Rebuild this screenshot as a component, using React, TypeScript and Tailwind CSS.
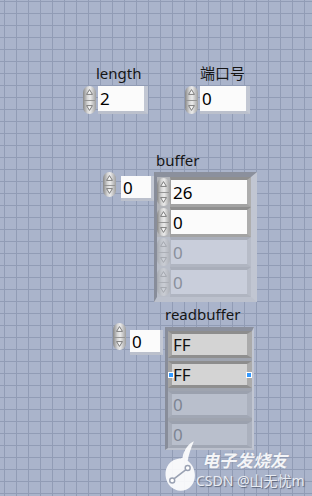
import type { ReactNode } from "react";

// LabVIEW front panel: two scalar controls, a numeric array control, an indicator array.

function Spinner({ size, faded }: { size: string; faded?: boolean }) {
  return (
    <div
      className={[
        "relative flex flex-col items-center justify-between w-[13px] rounded-full py-[3px]",
        "bg-[linear-gradient(to_right,#888888,#d6d6d6_35%,#ebebeb_55%,#9f9f9f)]",
        size,
        faded ? "opacity-35" : "",
      ].join(" ")}
    >
      <svg width="7" height="6" viewBox="0 0 7 6">
        <path d="M3.5 0.6 L6.4 5.4 H0.6 Z" fill="#f6f6f6" stroke="#707070" strokeWidth="0.9" />
      </svg>
      <div className="absolute left-[1px] right-[1px] top-1/2 h-px bg-[#959595]" />
      <svg width="7" height="6" viewBox="0 0 7 6">
        <path d="M3.5 5.4 L6.4 0.6 H0.6 Z" fill="#f6f6f6" stroke="#707070" strokeWidth="0.9" />
      </svg>
    </div>
  );
}

function Label({ children, className = "" }: { children: ReactNode; className?: string }) {
  return <div className={`h-[18px] text-[15px] leading-[18px] text-[#161616] whitespace-nowrap ${className}`}>{children}</div>;
}

function TopNumeric({ value }: { value: string }) {
  return (
    <div className="flex items-start">
      <Spinner size="h-[28px]" />
      <div className="ml-[2px] flex items-center w-[50px] h-[28px] pl-[2px] bg-[#fbfbfb] border-r-[4px] border-b-[3px] border-r-[#c2c7d3] border-b-[#bbc0cc] text-[17px] leading-none text-black">
        {value}
      </div>
    </div>
  );
}

function IndexNumeric({ spin, boxTop, gap, value }: { spin: string; boxTop: string; gap: string; value: string }) {
  return (
    <div className="flex items-start">
      <Spinner size={spin} />
      <div className={`${gap} ${boxTop} flex items-center w-[33px] h-[25px] pl-[2px] bg-[#fbfbfb] border-r-[3px] border-b-[3px] border-r-[#c2c7d3] border-b-[#bbc0cc] text-[17px] leading-none text-black`}>
        {value}
      </div>
    </div>
  );
}

function BufferElem({ value, disabled }: { value: string; disabled?: boolean }) {
  return (
    <div className="flex h-[30px]">
      <div className={`w-[13px] flex items-center ${disabled ? "bg-[#b9bec9]" : "bg-[#b3b5ba]"}`}>
        <Spinner size="h-[28px]" faded={disabled} />
      </div>
      <div
        className={[
          "flex-1 flex items-center pl-[2px] text-[17px] leading-none border-l border-t-[3px] border-b-[3px] border-r-[4px]",
          disabled
            ? "bg-[#c9cedb] text-[#8a909c] border-l-[#b3b8c4] border-t-[#a9aeba] border-b-[#b0b5c1] border-r-[#b7bcc8]"
            : "bg-[#fbfbfb] text-black border-l-[#a2a2a2] border-t-[#8f8f8f] border-b-[#a3a3a3] border-r-[#aeaeae]",
        ].join(" ")}
      >
        {value}
      </div>
    </div>
  );
}

function ReadElem({ value, disabled, selected }: { value: string; disabled?: boolean; selected?: boolean }) {
  return (
    <div
      className={[
        "relative flex items-center h-[27px] pl-[1px] text-[17px] leading-none border-l-[4px] border-t-[3px] border-b-[3px] border-r-[5px]",
        disabled
          ? "bg-[#b9bfcc] text-[#7e8593] border-l-[#a7adba] border-t-[#9ba1ae] border-b-[#a1a7b4] border-r-[#abb1be]"
          : "bg-[#d4d4d4] text-[#111] border-l-[#a5a5a5] border-t-[#8d8d8d] border-b-[#8f8f8f] border-r-[#ababab]",
      ].join(" ")}
    >
      {value}
      {selected && (
        <>
          <div className="absolute -left-[4px] top-1/2 -translate-y-1/2 w-[6px] h-[6px] bg-[#3399ff] border border-white" />
          <div className="absolute -right-[5px] top-1/2 -translate-y-1/2 w-[6px] h-[6px] bg-[#3399ff] border border-white" />
        </>
      )}
    </div>
  );
}

function Watermark() {
  return (
    <div className="absolute left-[165px] top-[438px] flex items-start pointer-events-none">
      <svg width="33" height="56" viewBox="0 0 32 54">
        <path
          d="M13 20 C5 21 0 28 0.5 36 C1 45 8 51 15 51 C24 51 29 44 29 36 C29 30 26 25 22 22 C23 16 25 10 28 3 C22 6 18 12 17 19 C16 19.5 14.5 19.8 13 20 Z"
          fill="#ffffff"
          fillOpacity="0.9"
        />
        <line x1="8" y1="40" x2="21" y2="30" stroke="#9aa2b3" strokeWidth="1.6" />
        <circle cx="7" cy="41" r="2.4" fill="#fff" stroke="#9aa2b3" strokeWidth="1.4" />
        <circle cx="22" cy="29" r="2.4" fill="#fff" stroke="#9aa2b3" strokeWidth="1.4" />
      </svg>
      <div className="ml-[4px] flex flex-col">
        <div className="mt-[14px] text-[17px] leading-[18px] font-bold italic text-white/90 [text-shadow:0_0_2px_rgba(120,130,150,0.6)]">
          电子发烧友
        </div>
        <div className="-ml-[6px] mt-[3px] text-[14px] leading-[15px] text-[#e9ecf3] [text-shadow:1px_1px_1px_rgba(60,70,90,0.7)]">
          CSDN @山无忧m
        </div>
      </div>
    </div>
  );
}

export default function App() {
  return (
    <div
      className={[
        "relative w-[312px] h-[496px] overflow-hidden",
        "font-['Noto_Sans','Noto_Sans_CJK_SC',sans-serif]",
        "bg-[#aab4cb] bg-[linear-gradient(90deg,#919cb5_1px,transparent_1px),linear-gradient(#919cb5_1px,transparent_1px)]",
        "[background-size:12px_12px] [background-position:4px_1px]",
      ].join(" ")}
    >
      {/* scalar controls */}
      <div className="flex pl-[83px] pt-[64px] gap-[37px]">
        <div className="flex flex-col">
          <Label className="ml-[13px]">length</Label>
          <div className="mt-[4px]">
            <TopNumeric value="2" />
          </div>
        </div>
        <div className="flex flex-col">
          <Label className="ml-[15px]">端口号</Label>
          <div className="mt-[4px]">
            <TopNumeric value="0" />
          </div>
        </div>
      </div>

      {/* buffer array control */}
      <div className="flex pl-[103px] mt-[37px]">
        <div className="pt-[21px]">
          <IndexNumeric spin="h-[25px]" boxTop="mt-[4px]" gap="ml-[5px]" value="0" />
        </div>
        <div className="flex flex-col">
          <Label className="ml-[2px]">buffer</Label>
          <div className="mt-[3px] w-[103px] flex flex-col border-l-[3px] border-t-[5px] border-r-[6px] border-b-[5px] border-l-[#888d9a] border-t-[#8b909d] border-r-[#c1c6d2] border-b-[#bcc1cd] bg-[#a7acb7]">
            <BufferElem value="26" />
            <BufferElem value="0" />
            <BufferElem value="0" disabled />
            <BufferElem value="0" disabled />
          </div>
        </div>
      </div>

      {/* readbuffer array indicator */}
      <div className="flex pl-[113px] mt-[3px]">
        <div className="pt-[18px]">
          <IndexNumeric spin="h-[27px]" boxTop="mt-[7px]" gap="ml-[4px]" value="0" />
        </div>
        <div className="ml-[2px] flex flex-col">
          <Label>readbuffer</Label>
          <div className="mt-[4px] w-[89px] flex flex-col gap-[3px] border-l-[3px] border-t-[4px] border-r-[2px] border-b-[2px] border-l-[#888d9a] border-t-[#8b909d] border-r-[#c1c6d2] border-b-[#bcc1cd] bg-[#9fa4af]">
            <ReadElem value="FF" />
            <ReadElem value="FF" selected />
            <ReadElem value="0" disabled />
            <ReadElem value="0" disabled />
          </div>
        </div>
      </div>

      <Watermark />
    </div>
  );
}
